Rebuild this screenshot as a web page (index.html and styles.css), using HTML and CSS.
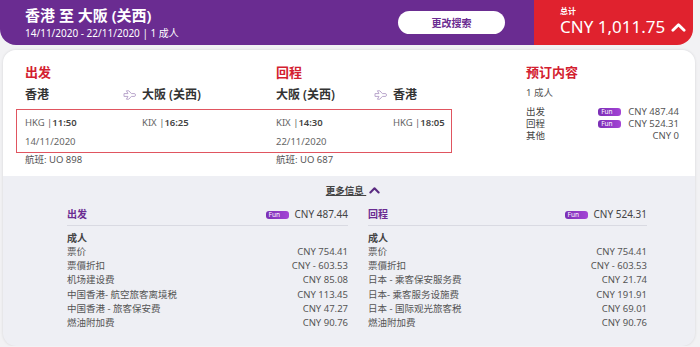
FILE: index.html
```html
<!DOCTYPE html>
<html lang="zh">
<head>
  <meta charset="UTF-8">
  <title>预订内容</title>
  <meta name="viewport" content="width=device-width, initial-scale=1.0">
  <link rel="stylesheet" href="styles.css">
</head>
<body>
<div id="topbar">
  <div class="search-info">
    <div class="route-title">香港 至 大阪 (关西)</div>
    <div class="route-sub">14/11/2020 - 22/11/2020 | 1 成人</div>
    <button class="change-btn">更改搜索</button>
  </div>
  <div class="total">
    <div class="total-label">总计</div>
    <div class="total-amount">CNY 1,011.75
      <svg class="chev" viewBox="0 0 16 10" width="15" height="10"><path d="M2 8.5 L8 2.5 L14 8.5" fill="none" stroke="#fff" stroke-width="3" stroke-linecap="round" stroke-linejoin="round"/></svg>
    </div>
  </div>
</div>

<div id="card">
  <div class="card-top">
    <div class="trip">
      <div class="leg-row heads">
        <div class="leg">
          <div class="leg-title">出发</div>
          <div class="cities"><span>香港</span><svg class="plane" viewBox="0 0 14 10" width="14" height="10"><path d="M1 3.6 H5 L3.4 0.8 H5.8 L8.4 3.6 H11.8 Q13.4 5 11.8 6.4 H8.4 L5.8 9.2 H3.4 L5 6.4 H1 Z" fill="none" stroke="#b9a6cc" stroke-width="1" stroke-linejoin="round"/></svg><span>大阪 (关西)</span></div>
        </div>
        <div class="leg">
          <div class="leg-title">回程</div>
          <div class="cities"><span>大阪 (关西)</span><svg class="plane" viewBox="0 0 14 10" width="14" height="10"><path d="M1 3.6 H5 L3.4 0.8 H5.8 L8.4 3.6 H11.8 Q13.4 5 11.8 6.4 H8.4 L5.8 9.2 H3.4 L5 6.4 H1 Z" fill="none" stroke="#b9a6cc" stroke-width="1" stroke-linejoin="round"/></svg><span>香港</span></div>
        </div>
      </div>
      <div class="times-box">
        <div class="leg-row">
          <div class="times"><span>HKG |<b>11:50</b></span><span>KIX |<b>16:25</b></span></div>
          <div class="times"><span>KIX |<b>14:30</b></span><span>HKG |<b>18:05</b></span></div>
        </div>
        <div class="leg-row dates">
          <div>14/11/2020</div>
          <div>22/11/2020</div>
        </div>
      </div>
      <div class="leg-row flights">
        <div>航班: UO 898</div>
        <div>航班: UO 687</div>
      </div>
    </div>
    <div class="summary">
      <div class="leg-title">预订内容</div>
      <div class="pax">1 成人</div>
      <div class="sum-row"><span>出发</span><span class="fun">Fun</span><span>CNY 487.44</span></div>
      <div class="sum-row"><span>回程</span><span class="fun">Fun</span><span>CNY 524.31</span></div>
      <div class="sum-row"><span>其他</span><span></span><span>CNY 0</span></div>
    </div>
  </div>

  <div class="card-bottom">
    <div class="more">更多信息
      <svg viewBox="0 0 16 10" width="11" height="8"><path d="M2 8.5 L8 2.5 L14 8.5" fill="none" stroke="#5a2a80" stroke-width="3" stroke-linecap="round" stroke-linejoin="round"/></svg>
    </div>
    <div class="details">
      <div class="detail-col">
        <div class="detail-head"><span>出发</span><span class="fun">Fun</span><span class="head-price">CNY 487.44</span></div>
        <div class="pax-type">成人</div>
        <div class="fee"><span>票价</span><span>CNY 754.41</span></div>
        <div class="fee"><span>票價折扣</span><span>CNY - 603.53</span></div>
        <div class="fee"><span>机场建设费</span><span>CNY 85.08</span></div>
        <div class="fee"><span>中国香港- 航空旅客离境税</span><span>CNY 113.45</span></div>
        <div class="fee"><span>中国香港 - 旅客保安费</span><span>CNY 47.27</span></div>
        <div class="fee"><span>燃油附加费</span><span>CNY 90.76</span></div>
      </div>
      <div class="detail-col">
        <div class="detail-head"><span>回程</span><span class="fun">Fun</span><span class="head-price">CNY 524.31</span></div>
        <div class="pax-type">成人</div>
        <div class="fee"><span>票价</span><span>CNY 754.41</span></div>
        <div class="fee"><span>票價折扣</span><span>CNY - 603.53</span></div>
        <div class="fee"><span>日本 - 乘客保安服务费</span><span>CNY 21.74</span></div>
        <div class="fee"><span>日本- 乘客服务设施费</span><span>CNY 191.91</span></div>
        <div class="fee"><span>日本 - 国际观光旅客税</span><span>CNY 69.01</span></div>
        <div class="fee"><span>燃油附加费</span><span>CNY 90.76</span></div>
      </div>
    </div>
  </div>
</div>
</body>
</html>
```

FILE: styles.css
```css
body, html {
  margin: 0;
  padding: 0;
  font-family: 'Noto Sans', 'Noto Sans CJK SC', sans-serif;
  background-color: #f2f2f4;
  color: #555;
  overflow: hidden;
}
#topbar {
  display: flex;
  height: 45px;
  width: 693px;
}
.search-info {
  flex: 1;
  position: relative;
  background: #6a2c91;
  color: #fff;
  padding: 6px 0 0 25px;
  border-bottom-left-radius: 16px;
  box-sizing: border-box;
}
.route-title {
  font-size: 15px;
  font-weight: 600;
  line-height: 18px;
}
.route-sub {
  font-size: 10px;
  line-height: 15px;
  margin-top: 2px;
}
.change-btn {
  position: absolute;
  left: 398px;
  top: 11px;
  width: 107px;
  height: 23px;
  border: none;
  border-radius: 12px;
  background: #fff;
  color: #6a2c91;
  font-family: inherit;
  font-size: 10px;
  font-weight: bold;
}
.total {
  width: 159px;
  background: #e0222e;
  color: #fff;
  padding: 6px 0 0 26px;
  box-sizing: border-box;
  border-bottom-right-radius: 16px;
}
.total-label {
  font-size: 8px;
  font-weight: bold;
  line-height: 10px;
}
.total-amount {
  font-size: 17px;
  line-height: 22px;
  white-space: nowrap;
}
.chev {
  margin-left: 1px;
  vertical-align: 1px;
}
#card {
  margin: 5px 5px 0 3px;
  border-radius: 13px;
  overflow: hidden;
  background: #eeeff4;
  box-shadow: 0 0 3px rgba(0, 0, 0, 0.12);
}
.card-top {
  background: #fff;
  display: flex;
  padding: 13px 0 12px 13px;
  height: 101px;
}
.trip {
  width: 436px;
}
.leg-row {
  display: grid;
  grid-template-columns: 251px 1fr;
  padding-left: 9px;
}
.leg-title {
  color: #d3202f;
  font-size: 13px;
  font-weight: bold;
  line-height: 18px;
}
.cities {
  display: grid;
  grid-template-columns: 98px 19px auto;
  align-items: center;
  margin-top: 5px;
  font-size: 12px;
  font-weight: 600;
  color: #333;
  line-height: 17px;
}
.times-box {
  border: 1px solid #e05560;
  margin-top: 6px;
  padding: 5px 0 2px;
}
.times-box .leg-row {
  padding-left: 8px;
}
.times {
  display: grid;
  grid-template-columns: 117px auto;
  font-size: 9.5px;
  line-height: 16px;
  color: #666;
}
.times b {
  color: #444;
  font-weight: 600;
}
.dates {
  font-size: 9.5px;
  line-height: 16px;
  margin-top: 3px;
  color: #666;
}
.flights {
  font-size: 9.5px;
  line-height: 13px;
  color: #555;
}
.summary {
  margin-left: 74px;
  width: 153px;
}
.pax {
  font-size: 9.5px;
  margin-top: 5px;
  line-height: 14px;
  margin-bottom: 6px;
}
.sum-row {
  display: grid;
  grid-template-columns: 1fr 30px auto;
  align-items: center;
  font-size: 9.5px;
  line-height: 12px;
  color: #444;
}
.sum-row span:last-child {
  text-align: right;
  color: #555;
}
.fun {
  display: inline-block;
  width: 23px;
  height: 8px;
  line-height: 8px;
  border-radius: 3px;
  background: linear-gradient(90deg, #7b2fb5, #a444d6);
  color: #fff;
  font-size: 6.5px;
  padding-left: 3px;
  box-sizing: border-box;
}
.card-bottom {
  padding: 8px 0 16px;
}
.more {
  text-align: center;
  font-size: 9.5px;
  font-weight: bold;
  color: #444;
  text-decoration: underline;
  line-height: 14px;
  margin-left: 8px;
}
.more svg {
  margin-left: 3px;
}
.details {
  display: grid;
  grid-template-columns: 281px 279px;
  column-gap: 20px;
  padding-left: 64px;
  margin-top: 9px;
}
.detail-head {
  display: flex;
  align-items: center;
  border-bottom: 1px solid #d9dae2;
  padding-bottom: 3px;
  font-size: 10px;
  line-height: 15px;
}
.detail-head span:first-child {
  flex: 1;
  color: #6a2c91;
  font-weight: bold;
}
.head-price {
  margin-left: 6px;
  color: #444;
}
.pax-type {
  font-size: 10px;
  font-weight: bold;
  color: #444;
  line-height: 14px;
  margin-top: 5px;
}
.fee {
  display: flex;
  justify-content: space-between;
  font-size: 9.5px;
  line-height: 14.2px;
  color: #555;
}
```
